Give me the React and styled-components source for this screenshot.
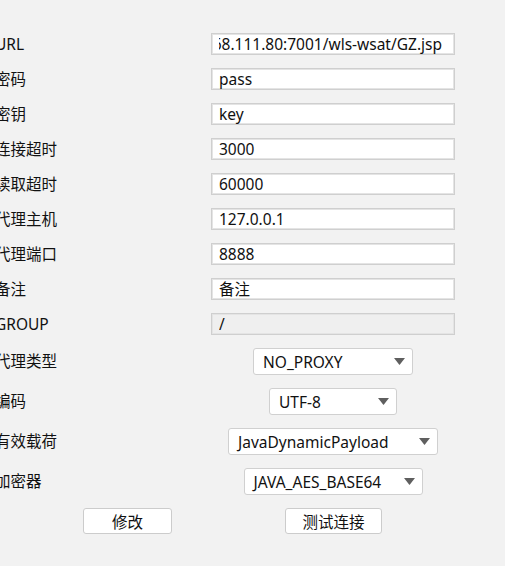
import styled, { createGlobalStyle } from "styled-components";

const GlobalStyle = createGlobalStyle`
  html, body {
    margin: 0;
    padding: 0;
    background: #f2f2f2;
  }
  body {
    font-family: "Noto Sans", "Noto Sans CJK SC", sans-serif;
    font-size: 15.5px;
    color: #111;
    overflow: hidden;
  }
`;

const textRows = [
  { label: "URL", value: "http://192.168.111.80:7001/wls-wsat/GZ.jsp", scrolled: true },
  { label: "密码", value: "pass" },
  { label: "密钥", value: "key" },
  { label: "连接超时", value: "3000" },
  { label: "读取超时", value: "60000" },
  { label: "代理主机", value: "127.0.0.1" },
  { label: "代理端口", value: "8888" },
  { label: "备注", value: "备注" },
  { label: "GROUP", value: "/", disabled: true },
];

const selectRows = [
  { label: "代理类型", value: "NO_PROXY", width: 160 },
  { label: "编码", value: "UTF-8", width: 128 },
  { label: "有效载荷", value: "JavaDynamicPayload", width: 210 },
  { label: "加密器", value: "JAVA_AES_BASE64", width: 179 },
];

const Arrow = () => (
  <svg width="11" height="7" viewBox="0 0 11 7">
    <polygon points="0,0 11,0 5.5,7" fill="#5f5f5f" />
  </svg>
);

export default function App() {
  return (
    <>
      <GlobalStyle />
      <Form>
        {textRows.map((row) => (
          <Row key={row.label}>
            <Label>{row.label}</Label>
            <Field $disabled={row.disabled}>
              <FieldText $scrolled={row.scrolled}>
                <span>{row.value}</span>
              </FieldText>
            </Field>
          </Row>
        ))}
        {selectRows.map((row) => (
          <Row key={row.label}>
            <Label>{row.label}</Label>
            <SelectCell>
              <Select $width={row.width}>
                <span>{row.value}</span>
                <Arrow />
              </Select>
            </SelectCell>
          </Row>
        ))}
        <ButtonRow>
          <Button $width={89} $offset={88}>修改</Button>
          <Button $width={97} $offset={113}>测试连接</Button>
        </ButtonRow>
      </Form>
    </>
  );
}

const Form = styled.div`
  display: flex;
  flex-direction: column;
  gap: 13px;
  padding-top: 33px;
  margin-left: -5px;
`;

const Row = styled.div`
  display: grid;
  grid-template-columns: 216px 244px;
  align-items: center;
`;

const Label = styled.div`
  white-space: nowrap;
  line-height: 20px;
  margin-top: -1px;
`;

const Field = styled.div`
  box-sizing: border-box;
  height: 22px;
  padding: 0 12px 0 7px;
  background: ${({ $disabled }) => ($disabled ? "#efefef" : "#ffffff")};
  border: 1px solid #cfcfcf;
  box-shadow: inset 0 0 0 1px #e4e4e4;
  display: flex;
  align-items: center;
`;

const FieldText = styled.div`
  flex: 1;
  display: flex;
  justify-content: ${({ $scrolled }) => ($scrolled ? "flex-end" : "flex-start")};
  overflow: hidden;
  white-space: nowrap;
  line-height: 20px;
`;

const SelectCell = styled.div`
  display: flex;
  justify-content: center;
`;

const Select = styled.div`
  box-sizing: border-box;
  width: ${({ $width }) => $width}px;
  height: 27px;
  padding: 0 7px 0 9px;
  background: #ffffff;
  border: 1px solid #d0d0d0;
  border-radius: 3px;
  display: flex;
  align-items: center;
  justify-content: space-between;
  white-space: nowrap;
`;

const ButtonRow = styled.div`
  display: flex;
`;

const Button = styled.div`
  box-sizing: border-box;
  width: ${({ $width }) => $width}px;
  height: 26px;
  margin-left: ${({ $offset }) => $offset}px;
  background: #ffffff;
  border: 1px solid #cccccc;
  border-radius: 3px;
  display: flex;
  align-items: center;
  justify-content: center;
  font-family: "Noto Sans CJK SC", sans-serif;
`;
